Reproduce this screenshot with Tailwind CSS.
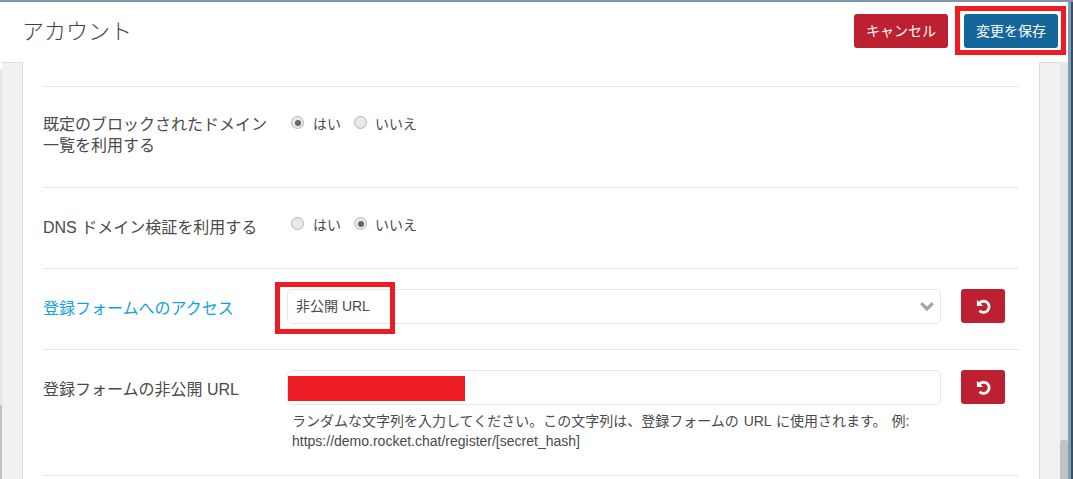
<!DOCTYPE html>
<html lang="ja">
<head>
  <meta charset="UTF-8">
  <title>アカウント</title>
  <meta name="viewport" content="width=device-width, initial-scale=1.0">
  <script src="https://cdn.jsdelivr.net/npm/@tailwindcss/browser@4"></script>
</head>
<body class="h-screen overflow-hidden bg-white text-[#4a4a4a] font-['Liberation_Sans','Noto_Sans_CJK_JP',sans-serif]">
  <div class="relative flex h-full flex-col">
    <!-- window edge -->
    <div class="h-[2px] shrink-0 bg-[#7f95ad]"></div>

    <div class="flex min-h-0 flex-1">
      <div class="flex min-w-0 flex-1 flex-col">
        <!-- header -->
        <header class="flex h-[60px] shrink-0 items-center justify-between pl-[22px] pr-[10px]">
          <h1 class="text-[22px] font-light leading-none text-[#444]">アカウント</h1>
          <div class="flex gap-[16px] -mt-[2px]">
            <button class="h-[34px] w-[94px] rounded-[3px] bg-[#bc2031] text-[14px] text-white">キャンセル</button>
            <button class="h-[34px] w-[94px] rounded-[3px] bg-[#13679a] text-[14px] text-white">変更を保存</button>
          </div>
        </header>

        <!-- body -->
        <div class="flex min-h-0 flex-1">
          <div class="flex w-[23px] shrink-0">
            <div class="mt-[7px] w-[2px] bg-[#e6e6e6] pt-[336px]">
              <div class="h-[74px] bg-[#c2c2c2]"></div>
            </div>
            <div class="flex-1 border-t border-r border-[#ddd] bg-[#f1f1f1]"></div>
          </div>

          <main class="min-w-0 flex-1 px-[20px]">
            <div class="h-[24px] border-b border-[#e7e7e7] box-content"></div>

            <!-- blocked domains -->
            <section class="flex h-[101px] border-b border-[#e7e7e7] pt-[26px]">
              <label class="mt-[1px] w-[244px] shrink-0 text-[16px] leading-[21px]">既定のブロックされたドメイン<br>一覧を利用する</label>
              <div class="ml-[4px] flex h-[22px] items-center gap-[13px] text-[14px]">
                <span class="flex items-center gap-[9px]">
                  <span class="mb-[3px] flex size-[13px] items-center justify-center rounded-full border border-[#b5b5b5] bg-[#e9e9e9]"><span class="size-[6px] rounded-full bg-[#666]"></span></span>はい
                </span>
                <span class="flex items-center gap-[8px]">
                  <span class="mb-[3px] size-[13px] rounded-full border border-[#b5b5b5] bg-[#e9e9e9]"></span>いいえ
                </span>
              </div>
            </section>

            <!-- dns check -->
            <section class="flex h-[81px] border-b border-[#e7e7e7] pt-[26px]">
              <label class="w-[244px] shrink-0 text-[16px] leading-[28px]">DNS ドメイン検証を利用する</label>
              <div class="ml-[4px] flex h-[22px] items-center gap-[13px] text-[14px]">
                <span class="flex items-center gap-[9px]">
                  <span class="mb-[3px] size-[13px] rounded-full border border-[#b5b5b5] bg-[#e9e9e9]"></span>はい
                </span>
                <span class="flex items-center gap-[8px]">
                  <span class="mb-[3px] flex size-[13px] items-center justify-center rounded-full border border-[#b5b5b5] bg-[#e9e9e9]"><span class="size-[6px] rounded-full bg-[#666]"></span></span>いいえ
                </span>
              </div>
            </section>

            <!-- registration access -->
            <section class="flex h-[81px] border-b border-[#e7e7e7] pt-[20px]">
              <label class="mt-[1px] w-[244px] shrink-0 text-[16px] leading-[38px] text-[#13a2e0]">登録フォームへのアクセス</label>
              <div class="relative flex h-[35px] w-[654px] items-center rounded-[5px] border border-[#e7e7e7] pl-[8px] text-[14px]">
                非公開 URL
                <svg class="absolute right-[6px] top-[11px]" width="14" height="12" viewBox="0 0 14 12" fill="none" stroke="#a5a5a5" stroke-width="3.2"><path d="M1.2 2.2 7 8l5.8-5.8"/></svg>
              </div>
              <button class="ml-[20px] flex h-[34px] w-[44px] items-center justify-center rounded-[3px] bg-[#bc2031]">
                <svg width="15" height="15" viewBox="0 0 14 14" fill="none" stroke="#fff" stroke-width="2.6"><path d="M3.3 3.7A5.2 5.2 0 1 1 3.3 10.9"/><path d="M.8.8v5.8h5.8z" fill="#fff" stroke="none"/></svg>
              </button>
            </section>

            <!-- secret url -->
            <section class="flex h-[126px] border-b border-[#e7e7e7] pt-[20px]">
              <label class="mt-[1px] w-[244px] shrink-0 text-[16px] leading-[38px]">登録フォームの非公開 URL</label>
              <div class="w-[654px]">
                <div class="h-[35px] rounded-[5px] border border-[#e7e7e7] pt-[5px]">
                  <div class="h-[25px] w-[177px] bg-[#ed1c24]"></div>
                </div>
                <p class="mt-[6px] pl-[5px] text-[14px] leading-[20px] [word-spacing:1px]">ランダムな文字列を入力してください。この文字列は、登録フォームの URL に使用されます。 例: https://demo.rocket.chat/register/[secret_hash]</p>
              </div>
              <button class="ml-[20px] flex h-[34px] w-[44px] items-center justify-center rounded-[3px] bg-[#bc2031]">
                <svg width="15" height="15" viewBox="0 0 14 14" fill="none" stroke="#fff" stroke-width="2.6"><path d="M3.3 3.7A5.2 5.2 0 1 1 3.3 10.9"/><path d="M.8.8v5.8h5.8z" fill="#fff" stroke="none"/></svg>
              </button>
            </section>
          </main>

          <div class="flex w-[29px] shrink-0">
            <div class="w-[21px] border-t border-l border-[#ddd] bg-[#f1f1f1]"></div>
            <div class="w-[8px] bg-[#e6e6e6] pt-[378px]"><div class="h-[60px] rounded-t-[3px] bg-[#c2c2c2]"></div></div>
          </div>
        </div>
      </div>
      <div class="w-[3px] shrink-0 bg-[#7f9fc0]"></div>
      <div class="w-[2px] shrink-0 bg-[#3f4e5a]"></div>
    </div>

    <!-- red annotation boxes -->
    <div class="absolute left-[955px] top-[6px] h-[49px] w-[111px] border-[5px] border-[#ed1c24]"></div>
    <div class="absolute left-[275px] top-[282px] h-[52px] w-[120px] border-[5px] border-[#ed1c24]"></div>
  </div>
</body>
</html>
